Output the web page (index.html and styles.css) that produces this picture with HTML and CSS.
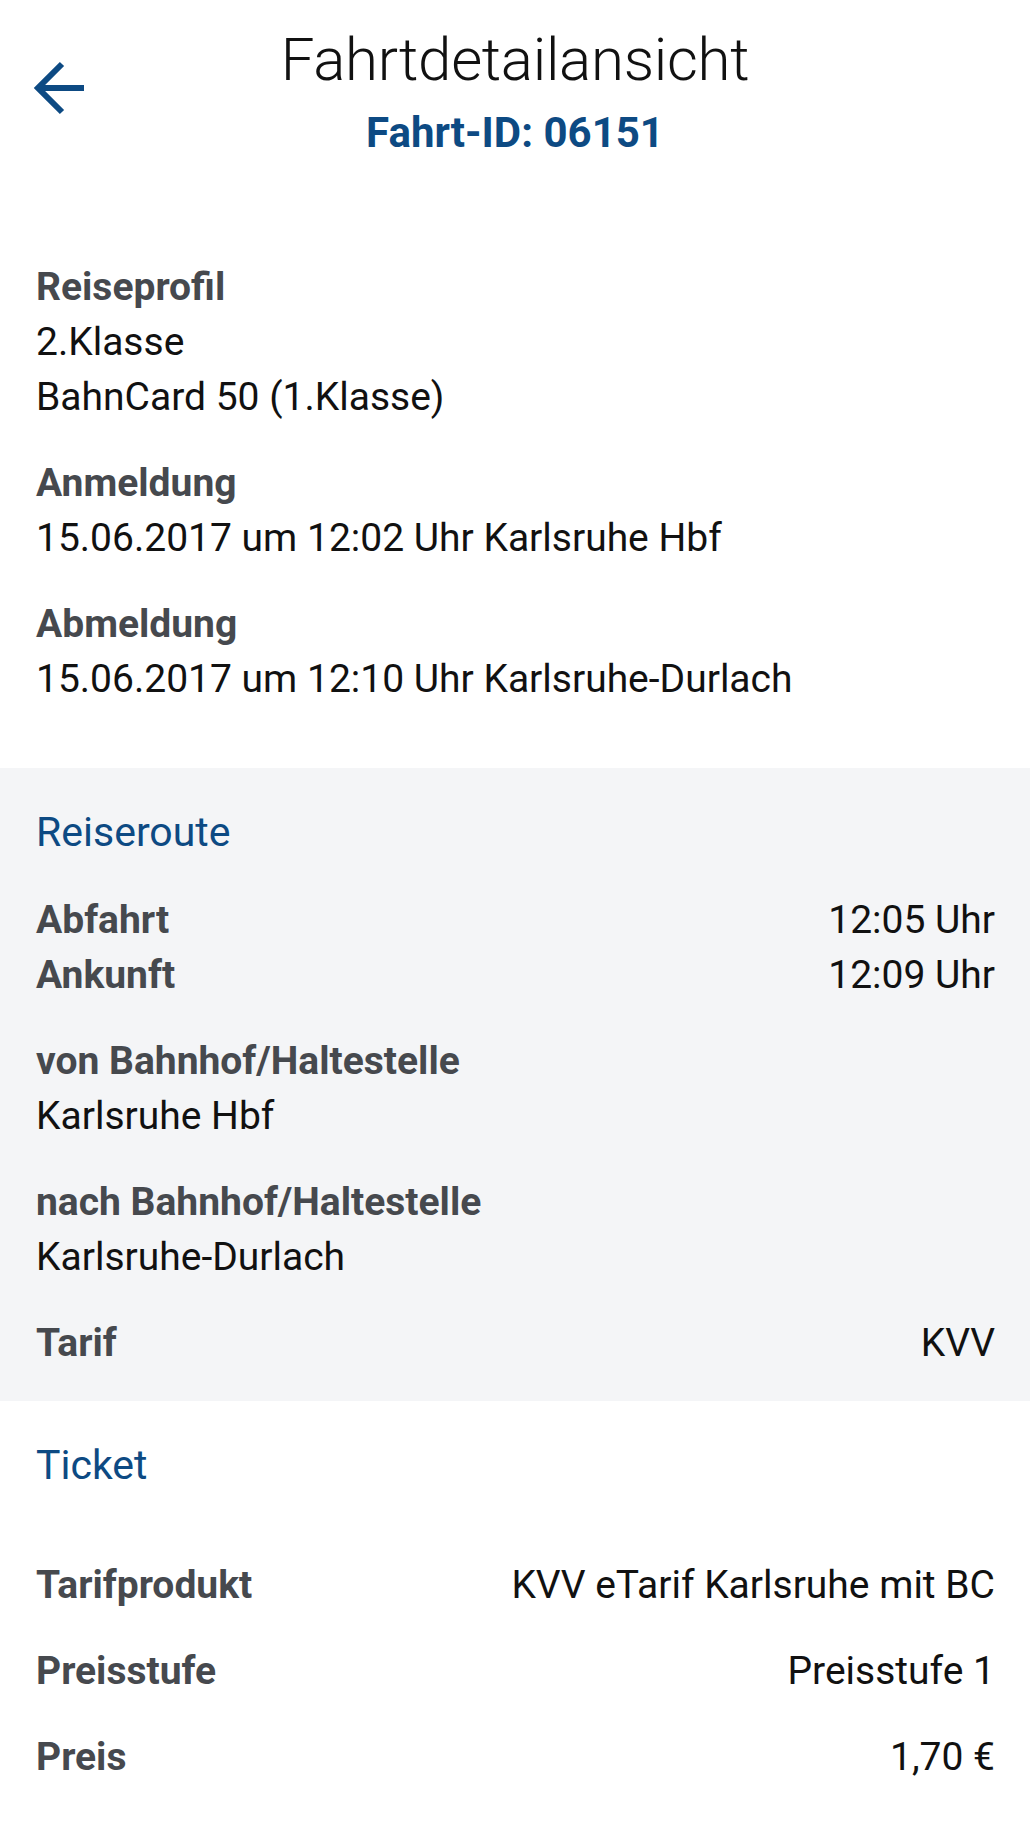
FILE: index.html
```html
<!DOCTYPE html>
<html lang="de">
<head>
<meta charset="utf-8">
<title>Fahrtdetailansicht</title>
<link rel="stylesheet" href="styles.css">
</head>
<body>
<div class="screen">
  <header class="header">
    <button class="back" aria-label="Zurück">
      <svg width="70" height="60" viewBox="0 0 70 60">
        <path d="M64 30 H20" stroke="#0d4a83" stroke-width="6" fill="none"/>
        <path d="M42 6 L18 30 L42 54" stroke="#0d4a83" stroke-width="6" fill="none"/>
      </svg>
    </button>
    <h1 class="title">Fahrtdetailansicht</h1>
    <div class="subtitle">Fahrt-ID: 06151</div>
  </header>

  <section class="block block-top">
    <div class="group">
      <div class="label">Reiseprofil</div>
      <div class="value">2.Klasse</div>
      <div class="value">BahnCard 50 (1.Klasse)</div>
    </div>
    <div class="group">
      <div class="label">Anmeldung</div>
      <div class="value">15.06.2017 um 12:02 Uhr Karlsruhe Hbf</div>
    </div>
    <div class="group">
      <div class="label">Abmeldung</div>
      <div class="value">15.06.2017 um 12:10 Uhr Karlsruhe-Durlach</div>
    </div>
  </section>

  <section class="block block-grey">
    <h2 class="section-title">Reiseroute</h2>
    <div class="group">
      <div class="row"><span class="label">Abfahrt</span><span class="value">12:05 Uhr</span></div>
      <div class="row"><span class="label">Ankunft</span><span class="value">12:09 Uhr</span></div>
    </div>
    <div class="group">
      <div class="label">von Bahnhof/Haltestelle</div>
      <div class="value">Karlsruhe Hbf</div>
    </div>
    <div class="group">
      <div class="label">nach Bahnhof/Haltestelle</div>
      <div class="value">Karlsruhe-Durlach</div>
    </div>
    <div class="group">
      <div class="row"><span class="label">Tarif</span><span class="value">KVV</span></div>
    </div>
  </section>

  <section class="block block-ticket">
    <h2 class="section-title">Ticket</h2>
    <div class="ticket-rows">
      <div class="group">
        <div class="row"><span class="label">Tarifprodukt</span><span class="value">KVV eTarif Karlsruhe mit BC</span></div>
      </div>
      <div class="group">
        <div class="row"><span class="label">Preisstufe</span><span class="value">Preisstufe 1</span></div>
      </div>
      <div class="group">
        <div class="row"><span class="label">Preis</span><span class="value">1,70 €</span></div>
      </div>
    </div>
  </section>
</div>
</body>
</html>
```

FILE: styles.css
```css
* { box-sizing: border-box; }

html, body {
  margin: 0;
  padding: 0;
  background: #ffffff;
}

body {
  font-family: Roboto, "Liberation Sans", sans-serif;
  color: #111111;
}

.screen {
  width: 1030px;
  min-height: 1848px;
  background: #ffffff;
}

.header {
  position: relative;
  display: flex;
  flex-direction: column;
  align-items: center;
  padding-top: 25px;
}

.back {
  position: absolute;
  left: 20px;
  top: 58px;
  width: 70px;
  height: 60px;
  padding: 0;
  border: 0;
  background: transparent;
  display: block;
}

.back svg { display: block; }

.title {
  margin: 0;
  font-family: Roboto, "Liberation Sans", sans-serif;
  font-weight: 300;
  font-size: 60px;
  line-height: 70px;
  color: #111111;
  letter-spacing: -0.3px;
}

.subtitle {
  margin-top: 9px;
  font-weight: 700;
  font-size: 42px;
  line-height: 58px;
  color: #0d4a83;
}

.block {
  padding: 0 35px 0 36px;
}

.block-top {
  padding-top: 98px;
  padding-bottom: 61px;
}

.group + .group {
  margin-top: 31px;
}

.label {
  font-weight: 700;
  font-size: 39px;
  line-height: 55px;
  color: #46494e;
}

.value {
  font-weight: 400;
  font-size: 39px;
  line-height: 55px;
  color: #111111;
}

.row {
  display: flex;
  justify-content: space-between;
  align-items: baseline;
}

.block-grey {
  background: #f4f5f7;
  padding-top: 37px;
  padding-bottom: 30px;
}

.section-title {
  margin: 0 0 33px 0;
  font-weight: 400;
  font-size: 41px;
  line-height: 55px;
  color: #0d4a83;
}

.block-ticket {
  padding-top: 37px;
  padding-bottom: 40px;
}

.block-ticket .section-title {
  margin-bottom: 65px;
}
```
